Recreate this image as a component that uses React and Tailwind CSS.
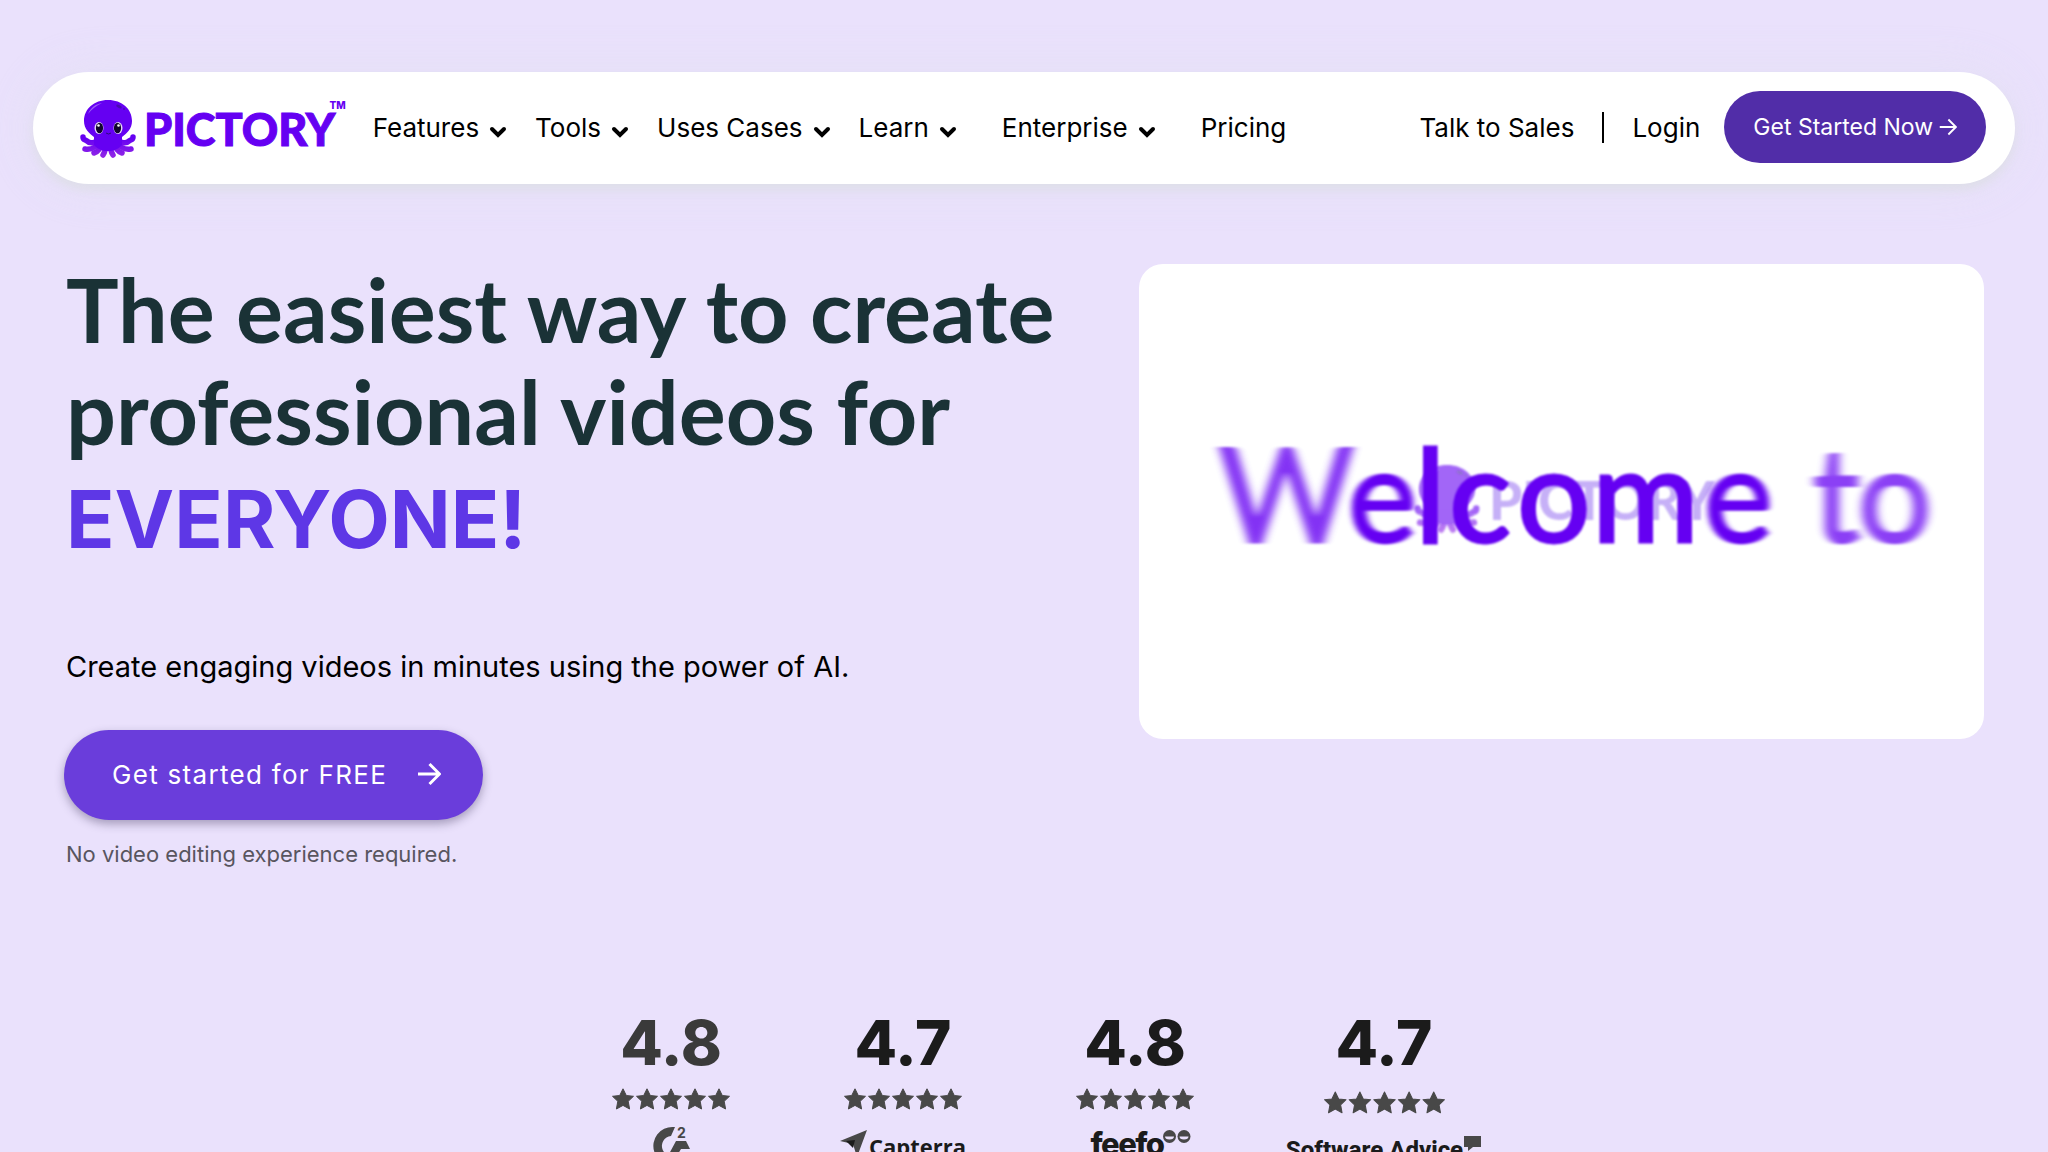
import React from "react";

const navItems = [
  { label: "Features", menu: true, gap: "mr-7" },
  { label: "Tools", menu: true, gap: "mr-7" },
  { label: "Uses Cases", menu: true, gap: "mr-7" },
  { label: "Learn", menu: true, gap: "mr-[45px]" },
  { label: "Enterprise", menu: true, gap: "mr-[45px]" },
  { label: "Pricing", menu: false, gap: "" },
];

function Chevron() {
  return (
    <svg viewBox="0 0 18 12" className="mt-2.5 ml-2.5 h-3 w-[18px]" fill="none" stroke="currentColor" strokeWidth="4" strokeLinecap="round" strokeLinejoin="miter" aria-hidden="true">
      <path d="M3 3l6 6 6-6" />
    </svg>
  );
}

function Arrow({ className, strokeWidth = 2 }) {
  return (
    <svg viewBox="0 0 24 24" className={className} fill="none" stroke="currentColor" strokeWidth={strokeWidth} aria-hidden="true">
      <path d="M1 12h21M12.500 2l10 10-10 10" />
    </svg>
  );
}

function Octopus({ className, ghost = false }) {
  return (
    <svg viewBox="0 0 56 58" className={className} aria-hidden="true">
      <defs>
        <linearGradient id="tentacle" gradientUnits="userSpaceOnUse" x1="0" y1="38" x2="0" y2="58">
          <stop offset="0" stopColor="#6500f2" />
          <stop offset="1" stopColor="#9328e6" />
        </linearGradient>
      </defs>
      <g fill="none" stroke="url(#tentacle)" strokeWidth="5.500" strokeLinecap="round">
        <path d="M21 37c-3 6-11 7-14 4-3-2-4-1-4-4" />
        <path d="M35 37c3 6 11 7 14 4 3-2 4-1 4-4" />
        <path d="M20 41c-4 7-9 9-15 8" />
        <path d="M36 41c4 7 9 9 15 8" />
        <path d="M23 41c-2 7-5 11-9 12" />
        <path d="M33 41c2 7 5 11 9 12" />
        <path d="M26 42c0 6-1 10-3 13" />
        <path d="M30 42c0 6 1 10 3 13" />
      </g>
      <path d="M28 0C14 0 4 9 4 21c0 8 5 12 10 16l0 8c4 4 8 6 14 6s10-2 14-6l0-8c5-4 10-8 10-16C52 9 42 0 28 0z" fill="#6500f2" />
      <path d="M8 14C11 7 16 4 22 3c-6 3-10 6-14 11z" fill="#9a5cf8" />
      <ellipse cx="39" cy="6.500" rx="3" ry="1.500" transform="rotate(25 39 6.500)" fill="#4a0bb0" />
      <circle cx="44" cy="9" r="1" fill="#4a0bb0" />
      {!ghost && (
        <g>
          <ellipse cx="19" cy="28" rx="4.500" ry="6" fill="#e9d9fb" />
          <ellipse cx="38" cy="28" rx="4.500" ry="6" fill="#e9d9fb" />
          <ellipse cx="19.500" cy="28" rx="3.600" ry="5.200" fill="#12052e" />
          <ellipse cx="37.500" cy="28" rx="3.600" ry="5.200" fill="#12052e" />
          <circle cx="18.500" cy="25.500" r="1.300" fill="#fff" />
          <circle cx="38.500" cy="25.500" r="1.300" fill="#fff" />
          <path d="M26 33q2.500 2 5 0" fill="none" stroke="#2d0780" strokeWidth="1" />
        </g>
      )}
    </svg>
  );
}

function Header() {
  return (
    <header className="mx-[33px] flex h-28 items-center rounded-full bg-white pr-[29px] pb-0.5 pl-[47px] text-[26px] text-black shadow-[0_6px_10px_rgba(210,220,210,0.4),0_0_50px_rgba(225,225,242,0.6)]">
      <a href="#home" aria-label="Pictory" className="mr-[27px] flex items-center pt-1">
        <Octopus className="h-[58px] w-14" />
        <span className="ml-2 font-['Lato'] text-[45px] leading-none font-black text-[#6500f2] [-webkit-text-stroke:1px_#6500f2]">PICTORY</span>
        <span className="-ml-1.5 pb-12 font-['Inter'] text-[10px] leading-none font-extrabold text-[#6500f2]">TM</span>
      </a>
      <nav className="flex items-center">
        {navItems.map((item) =>
          item.menu ? (
            <button key={item.label} type="button" className={`flex items-center whitespace-nowrap ${item.gap}`}>
              {item.label}
              <Chevron />
            </button>
          ) : (
            <a key={item.label} href="#pricing" className="whitespace-nowrap">{item.label}</a>
          )
        )}
      </nav>
      <div className="ml-auto flex items-center whitespace-nowrap">
        <a href="#sales">Talk to Sales</a>
        <span className="mx-7 h-[31px] w-0.5 bg-black" />
        <a href="#login">Login</a>
        <button type="button" className="ml-6 flex h-[72px] items-center gap-1.5 rounded-full bg-[#512da8] px-[29px] text-[23px] text-white">
          Get Started Now
          <Arrow className="h-[18px] w-[18px]" strokeWidth={2.5} />
        </button>
      </div>
    </header>
  );
}

function VideoFrame() {
  return (
    <div className="aspect-[845/475] overflow-hidden rounded-3xl bg-white">
      <svg viewBox="0 0 845 475" className="block h-full w-full" role="img" aria-label="Welcome to Pictory">
        <defs>
          <filter id="smear" x="-20%" width="140%"><feGaussianBlur stdDeviation="5 0.8" /></filter>
          <filter id="mid" x="-20%" width="140%"><feGaussianBlur stdDeviation="3 0.8" /></filter>
          <filter id="soft"><feGaussianBlur stdDeviation="0.8" /></filter>
        </defs>
        <g opacity="0.6" filter="url(#soft)">
          <svg x="275" y="201" width="66" height="68" viewBox="0 0 56 58">
            <Octopus ghost />
          </svg>
          <text x="350" y="256" fontFamily="Lato" fontWeight="900" fontSize="53" fill="#a07cf2">PICTORY</text>
        </g>
        <g fontFamily="Lato" fontSize="130" fontWeight="400" fill="#6500f2" stroke="#6500f2" strokeWidth="3">
          <text x="80" y="278" filter="url(#smear)" opacity="0.8">W</text>
          <text x="209" y="278" filter="url(#mid)">e</text>
          <text x="276 310 378 453" y="278" filter="url(#soft)">lcom</text>
          <text x="565" y="278" filter="url(#mid)">e</text>
          <text x="674 719" y="278" filter="url(#smear)" opacity="0.75">to</text>
        </g>
      </svg>
    </div>
  );
}

function Stars({ className }) {
  return (
    <svg viewBox="0 0 118 22" className={className} fill="#484848" stroke="#484848" strokeWidth="1" strokeLinejoin="round" role="img" aria-label="5 stars">
      {[0, 24, 48, 72, 96].map((x) => (
        <path key={x} transform={`translate(${x} 0)`} d="M11 .8L14.300 7.500l7.200.8-5.300 5 1.400 7.700L11 17.400l-6.600 3.600 1.400-7.700L.5 8.300l7.200-.8z" />
      ))}
    </svg>
  );
}

function G2() {
  return (
    <div className="relative ml-1 h-10 w-10">
      <svg viewBox="0 0 40 40" className="h-10 w-10" aria-hidden="true">
        <path d="M22 1h-2a19 19 0 1 0 11 34l-5-8a10 10 0 1 1-8-17z" fill="#484848" />
        <path d="M23 15h10l4 8h-9l-3 5h-9z" fill="#484848" />
      </svg>
      <span className="absolute top-0 left-6 text-sm leading-none font-bold text-[#484848]">2</span>
    </div>
  );
}

function Capterra() {
  return (
    <div className="flex items-start pt-1">
      <svg viewBox="0 0 27 27" className="h-[27px] w-[27px]" aria-hidden="true">
        <path d="M0 11L27 0 17 27 13 14z" fill="#484848" />
        <path d="M6 11l9-1-2 8z" fill="#1b1b1b" />
      </svg>
      <span className="ml-0.5 font-['Open_Sans'] text-[22px] leading-8 font-bold text-[#1b1b1b]">Capterra</span>
    </div>
  );
}

function Feefo() {
  return (
    <div className="flex items-start pt-1 pl-3">
      <span className="font-['Inter'] text-[31px] leading-7 font-extrabold tracking-tighter text-[#1b1b1b]">feefo</span>
      <svg viewBox="0 0 28 13" className="h-[13px] w-7" aria-hidden="true">
        <circle cx="6.500" cy="6.500" r="6.500" fill="#484848" />
        <circle cx="21" cy="6.500" r="6.500" fill="#484848" />
        <path d="M2 6.500h9a4.500 3 0 0 1-9 0zM16.500 6.500h9a4.500 3 0 0 1-9 0z" fill="#eae1fc" />
      </svg>
    </div>
  );
}

function SoftwareAdvice() {
  return (
    <div className="flex items-start pt-1.5">
      <span className="font-['Roboto'] text-[24px] leading-7 font-extrabold whitespace-nowrap text-[#1b1b1b]">Software Advice</span>
      <svg viewBox="0 0 19 15" className="h-[15px] w-[19px]" aria-hidden="true">
        <path d="M1 0h17v11h-8l-5 4V11H1z" fill="#484848" />
      </svg>
    </div>
  );
}

const ratings = [
  { score: "4.8", tone: "text-[#3a3a3a]", width: "w-[232px]", stars: "mt-[9px] h-[22px] w-[118px]", Logo: G2 },
  { score: "4.7", tone: "text-[#1b1b1b]", width: "w-[232px]", stars: "mt-[9px] h-[22px] w-[118px]", Logo: Capterra },
  { score: "4.8", tone: "text-[#1b1b1b]", width: "w-[232px]", stars: "mt-[9px] h-[22px] w-[118px]", Logo: Feefo },
  { score: "4.7", tone: "text-[#1b1b1b]", width: "w-[266px]", stars: "mt-3 h-[23px] w-[121px]", Logo: SoftwareAdvice },
];

export default function App() {
  return (
    <div className="min-h-screen bg-[#eae1fc] pt-[72px] font-['Inter',sans-serif]">
      <Header />
      <main>
        <section className="grid grid-cols-[1fr_845px] gap-x-12 pt-20 pr-16 pl-[66px]">
          <div>
            <h1 className="-mt-1.5 text-[88px] leading-[102px] font-bold whitespace-nowrap text-[#1a3236]">
              <span className="block font-['Lato']">The easiest way to create</span>
              <span className="block font-['Lato']">professional videos for</span>
              <span className="mt-1.5 block text-[80px] text-[#5e37e6]">EVERYONE!</span>
            </h1>
            <p className="mt-[77px] text-[29px] leading-10 text-black">Create engaging videos in minutes using the power of AI.</p>
            <button type="button" className="mt-[43px] -ml-0.5 flex h-[90px] items-center gap-[30px] rounded-full bg-[#6a3ddb] pr-[42px] pb-0.5 pl-12 text-[26px] tracking-wider text-white shadow-[0_4px_10px_rgba(60,50,90,0.4)]">
              Get started for FREE
              <Arrow className="h-6 w-6" strokeWidth={3} />
            </button>
            <p className="mt-[18px] text-[22px] leading-8 text-[#58555f]">No video editing experience required.</p>
          </div>
          <VideoFrame />
        </section>
        <section aria-label="Ratings" className="mt-[137px] flex justify-center pl-6">
          {ratings.map(({ score, tone, width, stars, Logo }, i) => (
            <div key={i} className={`flex flex-col items-center ${width}`}>
              <span className={`font-['Inter'] text-[62px] leading-[72px] font-extrabold ${tone}`}>{score}</span>
              <Stars className={stars} />
              <div className="mt-4 flex h-6 justify-center"><Logo /></div>
            </div>
          ))}
        </section>
      </main>
    </div>
  );
}
